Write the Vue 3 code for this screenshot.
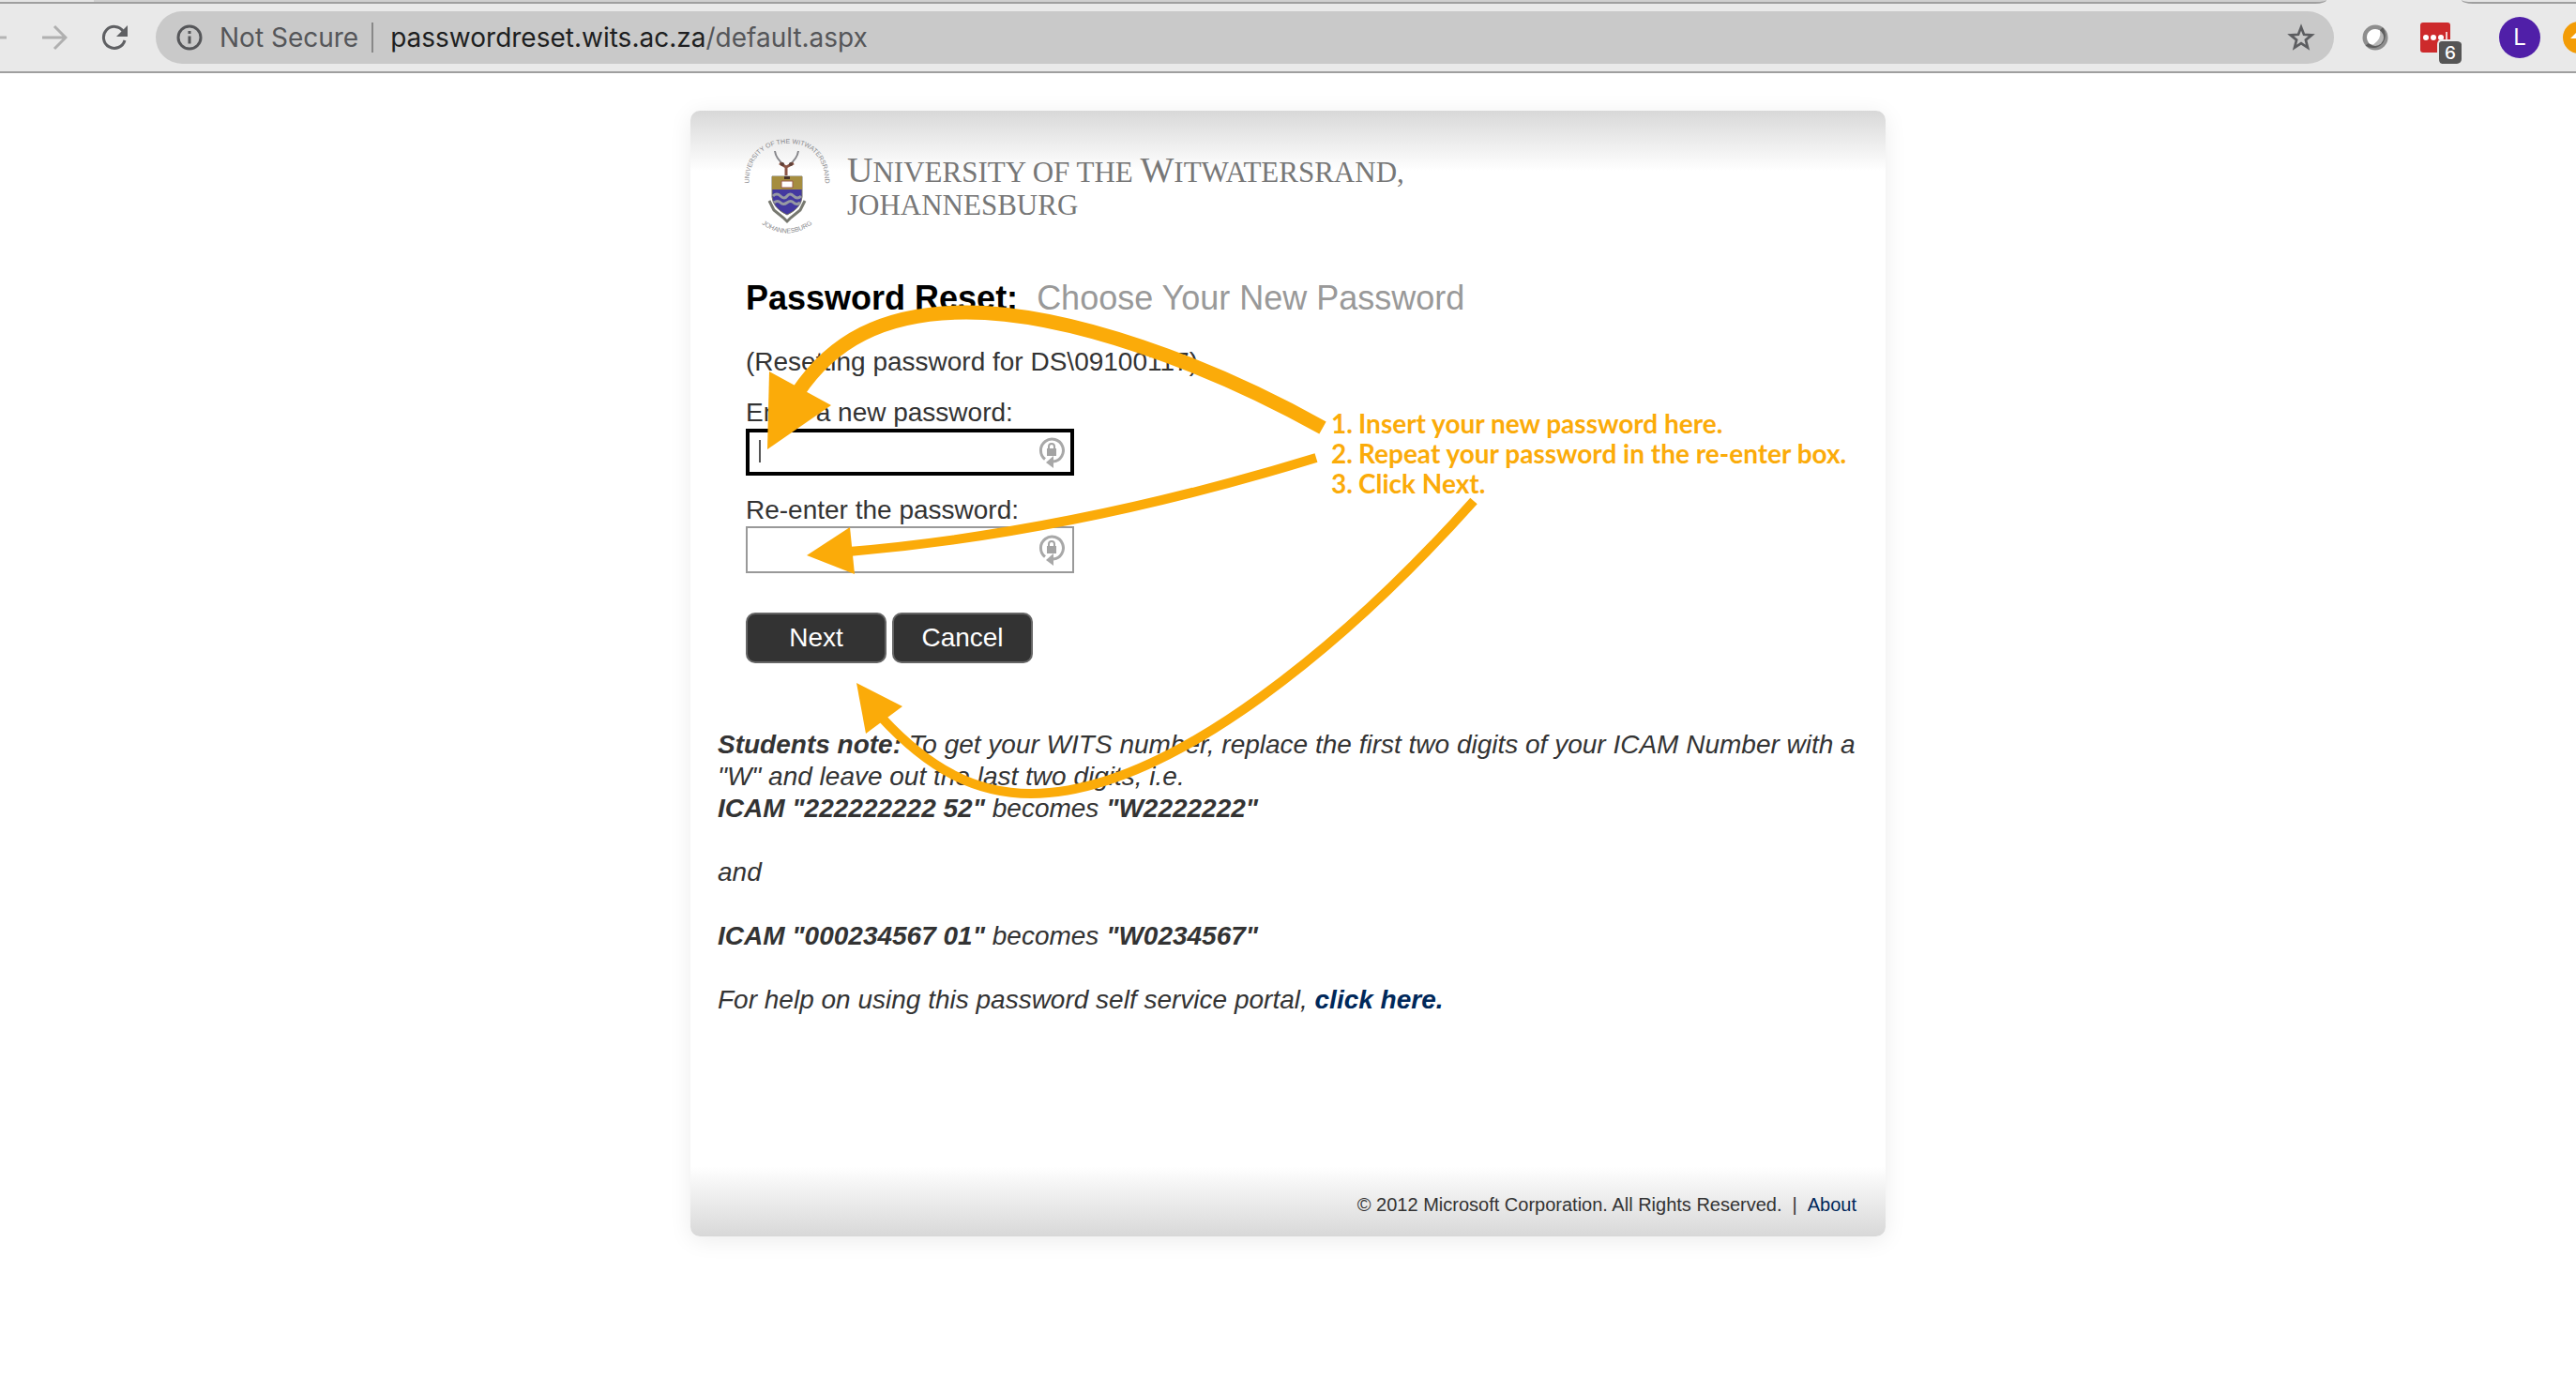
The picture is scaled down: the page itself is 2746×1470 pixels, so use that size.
<script setup>
import { ref } from 'vue'

const steps = [
  'Insert your new password here.',
  'Repeat your password in the re-enter box.',
  'Click Next.',
]
const newPassword = ref('')
const repeatPassword = ref('')
const url = 'passwordreset.wits.ac.za/default.aspx'
const [host, page] = url.split('/')
</script>

<template>
  <div class="window">
    <header class="browser">
      <div class="tabs">
        <span class="tab active"></span>
        <span class="tab next-tab"></span>
      </div>
      <div class="toolbar">
        <nav class="nav" aria-label="Browser navigation">
          <button type="button" aria-label="Back">
            <svg width="8" height="28" viewBox="0 0 8 28"><path d="M0 14h7" stroke="#b4b4b4" stroke-width="3" /></svg>
          </button>
          <button type="button" aria-label="Forward">
            <svg width="28" height="28" viewBox="0 0 28 28"><path d="M1 14h25M14 2l12 12-12 12" fill="none" stroke="#b0b0b0" stroke-width="3" /></svg>
          </button>
          <button type="button" aria-label="Reload">
            <svg width="28" height="28" viewBox="0 0 28 28">
              <path d="M23.500 7.500A11.500 11.500 0 1 0 25 17" fill="none" stroke="#5f6063" stroke-width="3" />
              <path d="M28 1v12H16z" fill="#5f6063" />
            </svg>
          </button>
        </nav>
        <div class="address">
          <svg width="28" height="28" viewBox="0 0 28 28">
            <circle cx="14" cy="14" r="12" fill="none" stroke="#555659" stroke-width="3" />
            <path d="M14 12.500v8M14 7v3" stroke="#555659" stroke-width="3" />
          </svg>
          <span class="insecure">Not Secure</span>
          <span class="bar"></span>
          <span class="url">{{ host }}<span class="path">/{{ page }}</span></span>
          <button type="button" class="star" aria-label="Bookmark this page">
            <svg width="30" height="30" viewBox="0 0 30 30"><path d="M15 4l3 7.800 8.300.5-6.400 5.300 2.100 8.200-7-4.600-7 4.600 2.100-8.200-6.400-5.300 8.300-.5z" fill="none" stroke="#5c5d60" stroke-width="2.700" /></svg>
          </button>
        </div>
        <div class="extensions">
          <svg width="28" height="28" viewBox="0 0 28 28">
            <circle cx="14" cy="14" r="13.500" fill="#8e8e8e" />
            <path d="M22 3.200A13.500 13.500 0 0 1 3.500 22.500L7 20a9.500 9.500 0 0 0 12-14z" fill="#5e5e5e" />
            <circle cx="14" cy="14" r="9" fill="#b8b8b8" />
            <path d="M5 14a9 9 0 0 1 14-7.500Q21 15 12 21.500Q6 22 5 14z" fill="#fff" />
          </svg>
          <div class="lastpass">
            <svg width="32" height="32" viewBox="0 0 32 32">
              <rect width="32" height="32" rx="3" fill="#cd2a2c" />
              <circle cx="6" cy="16" r="3" fill="#fff" /><circle cx="14" cy="16" r="3" fill="#fff" /><circle cx="22" cy="16" r="3" fill="#fff" />
              <path d="M28 10v12" stroke="#fff" stroke-width="1.500" />
            </svg>
            <span class="count">6</span>
          </div>
          <span class="rule"></span>
          <span class="avatar">L</span>
          <svg class="update" width="34" height="34" viewBox="0 0 34 34"><circle cx="17" cy="17" r="17" fill="#f39c06" /><path d="M8 18l9-9 9 9h-6v8h-6v-8z" fill="#fff" /></svg>
        </div>
      </div>
    </header>

    <main class="card">
      <div class="logo">
        <svg class="crest" width="92" height="104" viewBox="0 0 92 104" role="img" aria-label="University crest">
          <defs>
            <path id="ring-top" d="M6 56C3 30 15 8 46 7S89 30 86 56" />
            <path id="ring-bottom" d="M12 87Q46 118 80 87" />
          </defs>
          <text class="ring"><textPath href="#ring-top" startOffset="50%" text-anchor="middle">UNIVERSITY OF THE WITWATERSRAND</textPath></text>
          <text class="ring"><textPath href="#ring-bottom" startOffset="50%" text-anchor="middle">JOHANNESBURG</textPath></text>
          <g fill="none">
            <path d="M33 15Q34 23 43 30M58 15Q57 23 48 30" stroke="#86868a" stroke-width="2" />
            <path d="M38 28l7 4 8-4M45 32v9" stroke="#8b5546" stroke-width="3" />
            <circle cx="41" cy="29" r="2" fill="#5e4038" /><circle cx="50" cy="29" r="2" fill="#5e4038" />
          </g>
          <path d="M30 42h32v22Q61 76 46 83Q31 76 30 64z" fill="#4338a0" stroke="#777567" stroke-width="1" />
          <path d="M30 42h32v14H30z" fill="#a58d3f" />
          <path d="M40 47h12v7H40z" fill="#fff" stroke="#9b5b4a" stroke-width="1" />
          <path d="M43 42h6v3h-6z" fill="#463026" />
          <path d="M31 63q4-4 8 0t7 0 7 0 8 0M32 70q4-3 7 0t7 0 7 0 7 0" fill="none" stroke="#9699a2" stroke-width="3" />
          <path d="M27 68l5 10 10 8 4 4 4-4 10-8 5-10" fill="none" stroke="#77786f" stroke-width="3" />
        </svg>
        <p class="name"><span class="cap">U</span>NIVERSITY OF THE <span class="cap">W</span>ITWATERSRAND,<br />JOHANNESBURG</p>
      </div>

      <form class="reset" @submit.prevent>
        <h1>Password Reset: <span>Choose Your New Password</span></h1>
        <p class="account">(Resetting password for DS\09100117)</p>
        <div class="field">
          <label for="new-password">Enter a new password:</label>
          <div class="box">
            <input id="new-password" v-model="newPassword" class="current" type="password" autocomplete="off" />
            <span class="caret"></span>
            <svg class="lock" width="28" height="34" viewBox="0 0 28 34">
              <path d="M7 23.500A12 12 0 1 1 16 26" fill="none" stroke="#a8a8a8" stroke-width="3" />
              <path d="M16 20v13l-8-6z" fill="#a8a8a8" />
              <path d="M9 12h10v8H9z" fill="#a3a3a3" /><path d="M11 12v-2a3 3 0 0 1 6 0v2" fill="none" stroke="#a3a3a3" stroke-width="2" />
            </svg>
          </div>
        </div>
        <div class="field">
          <label for="repeat-password">Re-enter the password:</label>
          <div class="box">
            <input id="repeat-password" v-model="repeatPassword" type="password" autocomplete="off" />
            <svg class="lock" width="28" height="34" viewBox="0 0 28 34">
              <path d="M7 23.500A12 12 0 1 1 16 26" fill="none" stroke="#a8a8a8" stroke-width="3" />
              <path d="M16 20v13l-8-6z" fill="#a8a8a8" />
              <path d="M9 12h10v8H9z" fill="#a3a3a3" /><path d="M11 12v-2a3 3 0 0 1 6 0v2" fill="none" stroke="#a3a3a3" stroke-width="2" />
            </svg>
          </div>
        </div>
        <div class="actions">
          <button type="submit">Next</button>
          <button type="button">Cancel</button>
        </div>
      </form>

      <div class="note">
        <p><b>Students note:</b> To get your WITS number, replace the first two digits of your ICAM Number with a "W" and leave out the last two digits, i.e.<br /><b>ICAM "222222222 52"</b> becomes <b>"W2222222"</b></p>
        <p>and</p>
        <p><b>ICAM "000234567 01"</b> becomes <b>"W0234567"</b></p>
        <p>For help on using this password self service portal, <a href="#help">click here.</a></p>
      </div>

      <footer class="legal">
        <span>© 2012 Microsoft Corporation. All Rights Reserved.</span>
        <span>|</span>
        <a href="#about">About</a>
      </footer>

      <!-- Tutorial callouts drawn over the page -->
      <svg class="arrows" width="1274" height="1200" viewBox="736 118 1274 1200" aria-hidden="true">
        <g fill="none" stroke="#fbab09">
          <path d="M1410 456C1290 389 1140 333 1030 333C940 333 886 365 850 419" stroke-width="15" />
          <path d="M1403 488C1250 535 1080 573 905 588" stroke-width="10" />
          <path d="M1571 534C1445 675 1250 846 1099 846C1040 846 990 820 938 763" stroke-width="10" />
        </g>
        <g fill="#fbab09">
          <path d="M818 479L820 396L886 432z" />
          <path d="M860 592L906 562L911 612z" />
          <path d="M913 728L962 753L923 782z" />
        </g>
      </svg>
      <ol class="steps">
        <li v-for="(step, i) in steps" :key="step"><span>{{ i + 1 }}.</span>{{ step }}</li>
      </ol>
    </main>
  </div>
</template>

<style>
body {
  background: #fff;
}
</style>

<style scoped>
.window {
  overflow: hidden;
  font-family: "Liberation Sans", Arial, sans-serif;
  font-size: 28px;
  line-height: 34px;
  color: #333;
}
p,
h1,
ol {
  margin: 0;
  padding: 0;
}
svg {
  display: block;
  flex: none;
}
button {
  font: inherit;
}
.browser {
  border-bottom: 2px solid #9f9f9f;
  background: #e9e9e9;
  font-family: Inter, sans-serif;
}
.tabs {
  display: flex;
  justify-content: space-between;
  height: 4px;
  box-sizing: border-box;
}
.tab {
  box-sizing: border-box;
  border-bottom: 2px solid #9f9f9f;
  background: #cfcfcf;
}
.active {
  width: calc(100% - 266px);
  border-bottom-right-radius: 12px 4px;
  background: linear-gradient(90deg, #e5e5e5 100px, #cfcfcf 100px);
}
.next-tab {
  width: 122px;
  border-bottom-left-radius: 12px 4px;
  background: #e5e5e5;
}
.toolbar {
  display: flex;
  align-items: center;
  height: 72px;
}
.nav {
  display: flex;
  gap: 36px;
  padding-right: 30px;
}
.nav button,
.star {
  padding: 0;
  border: 0;
  background: none;
}
.address {
  flex: 1;
  display: flex;
  align-items: center;
  height: 56px;
  box-sizing: border-box;
  padding: 0 20px 0 22px;
  border-radius: 28px;
  background: #c9c9c9;
}
.insecure {
  margin-left: 18px;
  color: #555659;
}
.bar {
  width: 2px;
  height: 32px;
  margin: 0 18px 0 14px;
  background: #888;
}
.url {
  flex: 1;
  color: #1e1f21;
}
.path {
  color: #555659;
}
.extensions {
  display: flex;
  align-items: center;
  width: 258px;
  box-sizing: border-box;
  padding-left: 30px;
}
.lastpass {
  position: relative;
  margin: 0 28px 0 34px;
}
.count {
  position: absolute;
  left: 18px;
  top: 18px;
  width: 24px;
  height: 24px;
  border: 2px solid #e9e9e9;
  border-width: 2px 0 0 2px;
  border-radius: 5px;
  background: #555;
  color: #fff;
  font: 500 19px/26px Inter, sans-serif;
  text-align: center;
}
.rule {
  width: 2px;
  height: 32px;
  background: #bdbdbd;
}
.avatar {
  flex: none;
  width: 44px;
  margin: 0 24px;
  border-radius: 50%;
  background: #501fa8;
  color: #fff;
  font: 24px/44px Inter, sans-serif;
  text-align: center;
}
.card {
  position: relative;
  display: flex;
  flex-direction: column;
  box-sizing: border-box;
  width: 1274px;
  max-width: 100%;
  min-height: 1200px;
  margin: 40px auto 60px;
  padding-top: 28px;
  border-radius: 10px;
  background: linear-gradient(#d8d8d8, #fff 64px);
  box-shadow: 0 4px 24px rgba(0, 0, 0, 0.08);
}
.logo {
  display: flex;
  gap: 18px;
  padding-left: 57px;
}
.ring {
  font: 7px "Liberation Sans", sans-serif;
  fill: #88888c;
}
.name {
  padding-top: 18px;
  font-family: "Liberation Serif", serif;
  font-size: 31px;
  line-height: 35px;
  color: #777;
}
.cap {
  font-size: 38px;
}
.reset {
  padding: 47px 60px 0 59px;
}
h1 {
  font-size: 36px;
  line-height: 42px;
  color: #000;
}
h1 span {
  margin-left: 10px;
  font-weight: normal;
  color: #999;
}
.account {
  margin-top: 30px;
}
.field {
  margin-top: 20px;
}
.field label {
  display: block;
}
.box {
  position: relative;
  width: 350px;
}
.box input {
  display: block;
  width: 100%;
  height: 50px;
  box-sizing: border-box;
  padding: 0 46px 0 12px;
  border: 2px solid #999;
  background: #fff;
  font: inherit;
}
.box .current {
  border: 4px solid #000;
}
.caret {
  position: absolute;
  left: 14px;
  top: 12px;
  width: 2px;
  height: 24px;
  background: #555;
}
.lock {
  position: absolute;
  right: 10px;
  top: 9px;
}
.actions {
  display: flex;
  gap: 6px;
  margin-top: 42px;
}
.actions button {
  width: 150px;
  height: 54px;
  padding: 0;
  border: 2px solid #666;
  border-radius: 10px;
  background: #333;
  color: #fff;
}
.note {
  display: grid;
  gap: 34px;
  padding: 70px 29px 0;
  font-style: italic;
}
a {
  color: #00285a;
  text-decoration: none;
}
.note a {
  font-weight: bold;
}
.legal {
  display: flex;
  justify-content: flex-end;
  gap: 11px;
  margin-top: auto;
  padding: 29px 31px 22px;
  border-radius: 0 0 10px 10px;
  background: linear-gradient(#fff, #d8d8d8);
  font-size: 20px;
  line-height: 24px;
}
.arrows {
  position: absolute;
  left: 0;
  top: 0;
  pointer-events: none;
}
.steps {
  position: absolute;
  left: 683px;
  top: 317px;
  list-style: none;
  font: bold 28px/32px Lato, "Century Gothic", sans-serif;
  color: #fbab09;
  white-space: nowrap;
}
.steps li {
  display: flex;
}
.steps span {
  width: 29px;
}
</style>
